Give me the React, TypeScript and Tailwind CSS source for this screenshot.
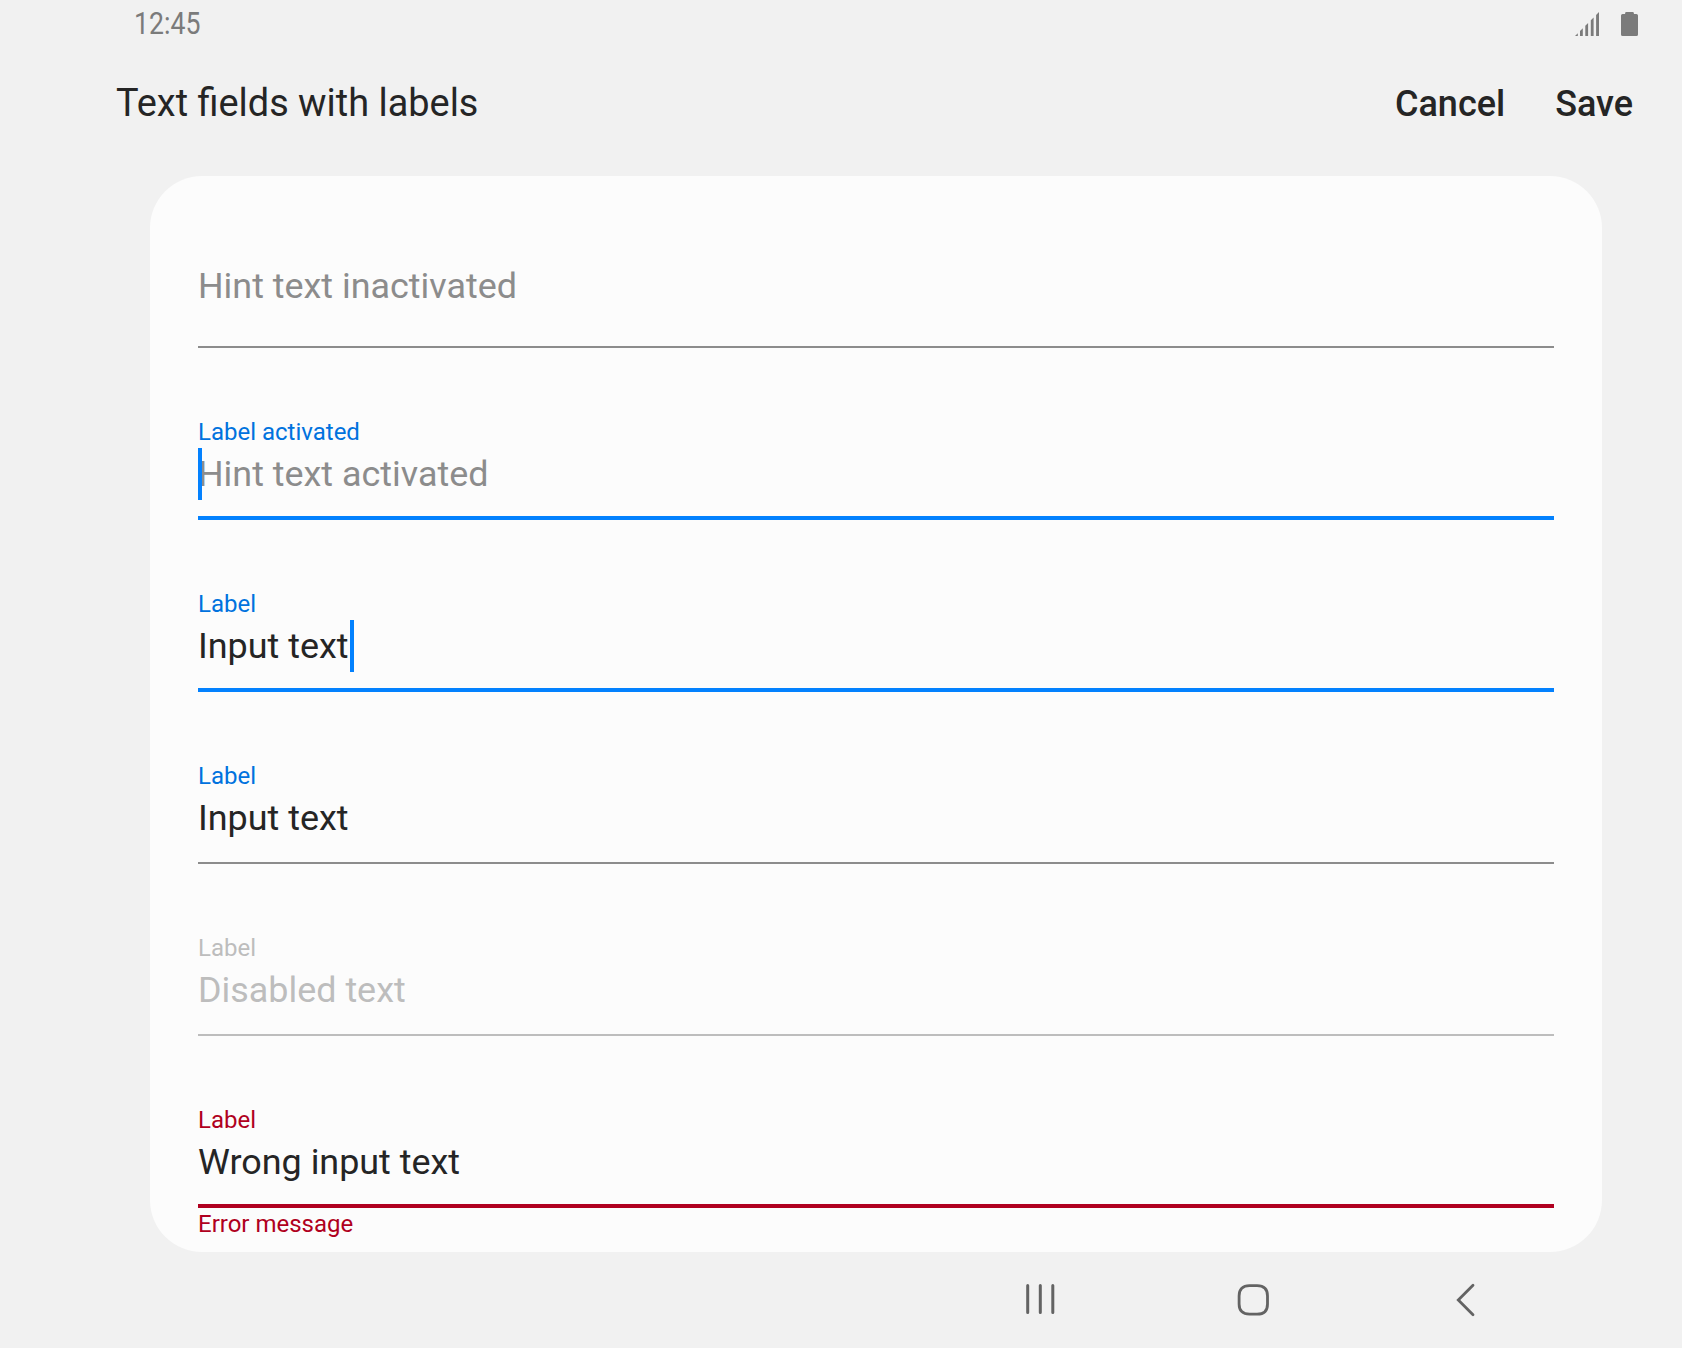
type Field = {
  label?: string;
  labelColor?: string;
  text: string;
  textColor: string;
  line: string;
  caret?: 'start' | 'end';
};

const fields: Field[] = [
  { text: 'Hint text inactivated', textColor: 'text-[#8c8c8c]', line: 'h-[2px] bg-[#8c8c8c]' },
  { label: 'Label activated', labelColor: 'text-[#0072de]', text: 'Hint text activated', textColor: 'text-[#8c8c8c]', line: 'h-1 bg-[#0381fe]', caret: 'start' },
  { label: 'Label', labelColor: 'text-[#0072de]', text: 'Input text', textColor: 'text-[#252525]', line: 'h-1 bg-[#0381fe]', caret: 'end' },
  { label: 'Label', labelColor: 'text-[#0072de]', text: 'Input text', textColor: 'text-[#252525]', line: 'h-[2px] bg-[#8c8c8c]' },
  { label: 'Label', labelColor: 'text-[#bdbdbd]', text: 'Disabled text', textColor: 'text-[#bdbdbd]', line: 'h-[2px] bg-[#bdbdbd]' },
  { label: 'Label', labelColor: 'text-[#b00020]', text: 'Wrong input text', textColor: 'text-[#252525]', line: 'h-1 bg-[#b00020]' },
];

function TextField({ label, labelColor, text, textColor, line, caret }: Field) {
  return (
    <div className={`flex h-[172px] flex-col ${label ? 'pt-[70px]' : 'pt-[84px]'}`}>
      {label && <div className={`mb-[2px] text-2xl leading-[28px] ${labelColor}`}>{label}</div>}
      <div className="flex">
        <div className={`relative whitespace-nowrap text-[35.9px] leading-[52px] ${textColor}`}>
          {text}
          {caret === 'start' && <span className="absolute left-0 top-0 h-[52px] w-1 bg-[#0381fe]" />}
          {caret === 'end' && <span className="absolute left-full top-0 ml-px h-[52px] w-1 bg-[#0381fe]" />}
        </div>
      </div>
      <div className={`mt-auto ${line}`} />
    </div>
  );
}

function StatusBar() {
  return (
    <div className="flex h-12 items-center justify-between pl-[134px] pr-[44px]">
      <span className="origin-left scale-x-[0.86] text-[31px] leading-[48px] text-[#7b7b7b]">12:45</span>
      <div className="flex gap-[22px]">
        <svg width="24" height="24" viewBox="0 0 24 24" fill="#7b7b7b">
          <path d="M0 24L2.8 21.2V24ZM5 24V19L7.8 16.2V24ZM10.3 24V13.7L13.1 10.9V24ZM15.8 24V8.2L18.6 5.4V24ZM21.1 24V2.9L24 0V24Z" />
        </svg>
        <svg width="17" height="24" viewBox="0 0 17 24" fill="#7b7b7b">
          <path d="M5.4 0H11.6Q12.9 0 12.9 1.3V2H15.4Q17 2 17 3.6V22.4Q17 24 15.4 24H1.6Q0 24 0 22.4V3.6Q0 2 1.6 2H4.1V1.3Q4.1 0 5.4 0Z" />
        </svg>
      </div>
    </div>
  );
}

function NavigationBar() {
  return (
    <div className="flex h-24 items-center justify-end gap-[173px] pr-[196px]">
      <svg width="40" height="40" viewBox="0 0 40 40" fill="none" stroke="#636363" strokeWidth="3" strokeLinecap="round">
        <path d="M7.7 5.5V32.5M20.3 5.5V32.5M32.8 5.5V32.5" />
      </svg>
      <svg width="40" height="40" viewBox="0 0 40 40" fill="none" stroke="#636363" strokeWidth="2.8">
        <path d="M16.5 5.7H24.100C30.900 5.700 34.500 9.200 34.500 16V23.900C34.500 30.700 30.900 34.200 24.100 34.200H16.500C9.700 34.200 6.100 30.700 6.100 23.900V16C6.100 9.200 9.700 5.700 16.500 5.700Z" />
      </svg>
      <svg width="40" height="40" viewBox="0 0 40 40" fill="none" stroke="#636363" strokeWidth="2.8" strokeLinecap="round">
        <path d="M27 5.300L12.300 20L27 34.700" />
      </svg>
    </div>
  );
}

export default function App() {
  return (
    <div className="flex h-[1348px] w-[1682px] flex-col overflow-hidden bg-[#f1f1f1] font-['Roboto',sans-serif]">
      <StatusBar />
      <header className="flex h-32 items-start justify-between pl-[116px] pr-[49px] pt-[25px] text-[#252525]">
        <h1 className="text-[37.9px] leading-[60px]">Text fields with labels</h1>
        <div className="flex gap-[50px] text-[36px] font-medium leading-[62px]">
          <button>Cancel</button>
          <button>Save</button>
        </div>
      </header>
      <main className="ml-[150px] mr-[80px] h-[1076px] shrink-0 rounded-[52px] bg-[#fcfcfc] px-12">
        {fields.map((field, i) => (
          <TextField key={i} {...field} />
        ))}
        <div className="pt-[2px] text-2xl leading-[28px] text-[#b00020]">Error message</div>
      </main>
      <NavigationBar />
    </div>
  );
}
